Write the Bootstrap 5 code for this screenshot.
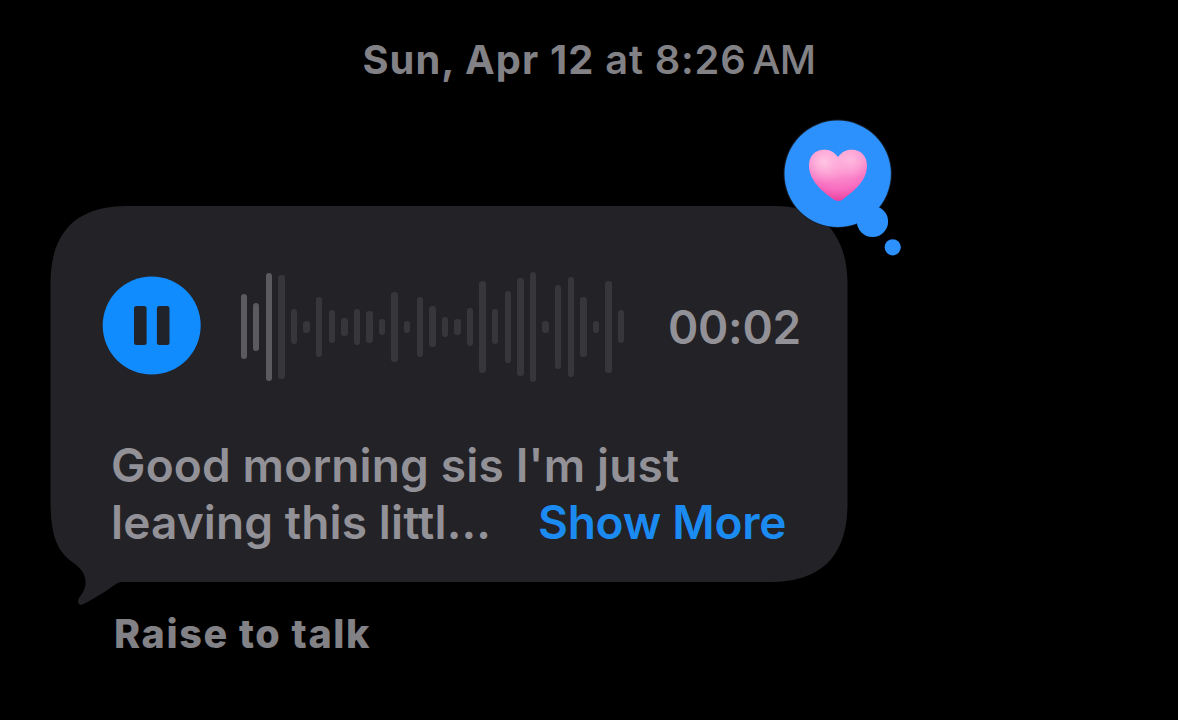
<!DOCTYPE html>
<html lang="en">
<head>
<meta charset="utf-8">
<meta name="viewport" content="width=device-width, initial-scale=1">
<title>Voice message</title>
<link href="https://cdn.jsdelivr.net/npm/bootstrap@5.3.0/dist/css/bootstrap.min.css" rel="stylesheet">
<style>
  body { background: #000; color: #828186; font-family: Inter, "Liberation Sans", sans-serif; width: 1178px; height: 720px; overflow: hidden; }
  .stamp { height: 206px; padding-top: 36px; font-size: 39.8px; line-height: 48px; font-weight: 600; white-space: nowrap; letter-spacing: .85px; }
  .stamp strong { font-weight: 700; letter-spacing: 1.1px; }
  .stamp .ampm { font-weight: 500; letter-spacing: -.6px; }
  .bubble { width: 797px; height: 376px; margin-left: 50px; padding: 65px 47px 0 52px; color: #929197; }
  .bubble-shape { left: 0; top: 0; z-index: 0; }
  .reaction { left: 730px; top: -90px; z-index: 2; }
  .player { height: 110px; }
  .pause { width: 100px; height: 100px; padding: 0; border: 0; background: none; }
  .wave { width: 384px; height: 110px; margin: 1px 43.5px 0 38.5px; }
  .bar { width: 6.4px; border-radius: 3.2px; background: #37363b; }
  .bar.played { background: #5b5a5f; }
  .clock { font-size: 46px; font-weight: 600; line-height: 56px; letter-spacing: -.3px; padding-top: 1px; }
  .transcript { font-size: 46px; line-height: 56.5px; font-weight: 600; margin: 56px 0 0 9px; white-space: nowrap; }
  .l1 { letter-spacing: .17px; }
  .l2 { width: 427px; letter-spacing: .12px; }
  .more { color: #1b8bf2; text-decoration: none; letter-spacing: -.25px; }
  .hint { margin: 28px 0 0 114px; font-size: 39.5px; font-weight: 800; line-height: 48px; letter-spacing: 1.6px; }
</style>
</head>
<body>
<main class="d-flex flex-column">
  <div class="stamp text-center"><strong>Sun, Apr 12</strong> at 8:26<span class="ampm">&#8202;&#8202;AM</span></div>
  <section class="bubble position-relative">
    <svg class="bubble-shape position-absolute" width="800" height="402" viewBox="50 206 800 402" aria-hidden="true">
      <path fill="#232226" d="M127 206H775C820 206 847.5 233 847.5 284V504C847.5 555 822 582 771 582H122C116 582 112 588 101 594C94 598 87 603 81 605C78 605 77 601 79 598C83 592 86 589 85.500 581C85 573 81 569 75 564C59 553 50.500 540 50.500 500V284C50.500 231 77 206 127 206Z"/>
    </svg>
    <svg class="reaction position-absolute" width="124" height="144" viewBox="780 116 124 144" role="img" aria-label="Heart reaction">
      <defs>
        <radialGradient id="hg" gradientUnits="userSpaceOnUse" cx="838" cy="146" r="57"><stop offset="0" stop-color="#ffa5d6"/><stop offset=".5" stop-color="#fb8fce"/><stop offset=".75" stop-color="#f86fc0"/><stop offset="1" stop-color="#e93a9c"/></radialGradient>
        <radialGradient id="hs" cx=".26" cy=".24" r=".42"><stop offset="0" stop-color="#ffd0e8" stop-opacity=".85"/><stop offset="1" stop-color="#ffb8dd" stop-opacity="0"/></radialGradient>
        <radialGradient id="hr" cx=".72" cy=".2" r=".36"><stop offset="0" stop-color="#ffc8e5" stop-opacity=".7"/><stop offset="1" stop-color="#ffb8dd" stop-opacity="0"/></radialGradient>
        <path id="heart" d="M838 157.300C834 151.500 829 149.800 824 149.800C815 149.800 809 156.500 809 165.500C809 181 823 192 834.500 200Q838.500 202.200 842 200C854 191 867 181 867 165.500C867 156.500 861 149.800 852 149.800C847 149.800 842 151.500 838 157.300Z"/>
      </defs>
      <circle cx="837.700" cy="173.800" r="54.200" fill="#17202c"/>
      <g fill="#2c91fd"><circle cx="837.700" cy="173.800" r="53.200"/><circle cx="872.500" cy="221.500" r="15.600"/><circle cx="892.700" cy="247.300" r="8.100"/></g>
      <use href="#heart" fill="url(#hg)"/><use href="#heart" fill="url(#hs)"/><use href="#heart" fill="url(#hr)"/>
    </svg>
    <div class="position-relative z-1">
      <div class="player d-flex align-items-center">
        <button class="pause flex-shrink-0" type="button" aria-label="Pause">
          <svg class="d-block" width="100" height="100" viewBox="102 276 100 100"><circle cx="151.700" cy="325.500" r="49" fill="#118cfe"/><g fill="#20232a"><rect x="134" y="306" width="12.600" height="39" rx="2.500"/><rect x="156.900" y="306" width="12.600" height="39" rx="2.500"/></g></svg>
        </button>
        <div class="wave d-flex align-items-center justify-content-between flex-shrink-0" id="wave"></div>
        <div class="clock"><span>00:02</span></div>
      </div>
      <div class="transcript">
        <div class="l1">Good morning sis I'm just</div>
        <div class="d-flex"><span class="l2">leaving this littl...</span><a class="more" href="#">Show More</a></div>
      </div>
    </div>
  </section>
  <div class="hint"><span>Raise to talk</span></div>
</main>
<script>
  const levels = [65,48,108,104,35,12,60,33,18,36,32,16,70,12,60,41,20,16,38,92,35,72,98,110,12,84,100,60,12,92,33];
  document.getElementById('wave').innerHTML = levels.map((h, i) =>
    `<span class="bar${i < 3 ? ' played' : ''}" style="height:${h}px"></span>`).join('');
</script>
<script src="https://cdn.jsdelivr.net/npm/bootstrap@5.3.0/dist/js/bootstrap.bundle.min.js"></script>
</body>
</html>
